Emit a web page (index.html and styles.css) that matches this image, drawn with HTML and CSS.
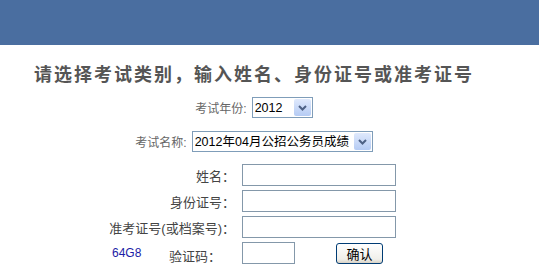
FILE: index.html
```html
<!DOCTYPE html>
<html lang="zh-CN">
<head>
    <meta charset="UTF-8">
    <title>成绩查询</title>
    <link rel="stylesheet" href="styles.css">
</head>
<body>
    <div class="site-header"></div>

    <div class="content">
        <h1 class="page-title">请选择考试类别，输入姓名、身份证号或准考证号</h1>

        <div class="field-row">
            <label class="field-label">考试年份:</label>
            <span class="select-box">
                <select class="select-year">
                    <option>2012</option>
                </select>
                <span class="select-arrow"><svg width="9" height="6" viewBox="0 0 9 6"><path d="M1 1 L4.5 4.5 L8 1" fill="none" stroke="#4d6185" stroke-width="2"/></svg></span>
            </span>
        </div>

        <div class="field-row row-name">
            <label class="field-label">考试名称:</label>
            <span class="select-box">
                <select class="select-exam">
                    <option>2012年04月公招公务员成绩</option>
                </select>
                <span class="select-arrow"><svg width="9" height="6" viewBox="0 0 9 6"><path d="M1 1 L4.5 4.5 L8 1" fill="none" stroke="#4d6185" stroke-width="2"/></svg></span>
            </span>
        </div>

        <form class="query-form" onsubmit="return false">
            <div class="form-row">
                <label class="form-label">姓名：</label>
                <input type="text" class="text-input">
            </div>
            <div class="form-row">
                <label class="form-label">身份证号：</label>
                <input type="text" class="text-input">
            </div>
            <div class="form-row">
                <label class="form-label">准考证号(或档案号)：</label>
                <input type="text" class="text-input">
            </div>
            <div class="form-row">
                <span class="captcha-code">64G8</span>
                <label class="captcha-label">验证码：</label>
                <input type="text" class="text-input captcha-input">
                <button type="submit" class="submit-btn">确认</button>
            </div>
        </form>
    </div>
</body>
</html>
```

FILE: styles.css
```css
body {
    margin: 0;
    font-family: "Liberation Sans", "Noto Sans CJK SC", sans-serif;
    font-size: 12px;
    color: #555;
    background: #fff;
}

.site-header {
    height: 45px;
    background: #4a6ea0;
}

.content {
    width: 508px;
}

.page-title {
    margin: 20px 0 0;
    font-size: 18px;
    line-height: 20px;
    font-weight: bold;
    letter-spacing: 2px;
    text-align: center;
    color: #555;
}

.field-row {
    display: flex;
    justify-content: center;
    align-items: center;
    height: 21px;
    margin-top: 12px;
}

.row-name {
    margin-top: 13px;
}

.field-label {
    margin-right: 5px;
    color: #666;
    font-size: 12px;
}

.select-box {
    display: inline-flex;
    align-items: center;
    box-sizing: border-box;
    height: 21px;
    padding-right: 1px;
    border: 1px solid #7f9db9;
    background: #fff;
}

.select-box select {
    -webkit-appearance: none;
    appearance: none;
    border: 0;
    outline: none;
    background: transparent;
    height: 19px;
    padding: 0 0 0 2px;
    font-family: "Liberation Sans", "Noto Sans CJK SC", sans-serif;
    font-size: 12.5px;
    color: #000;
}

.select-year {
    width: 41px;
}

.select-exam {
    width: 161px;
}

.select-arrow {
    display: flex;
    align-items: center;
    justify-content: center;
    width: 17px;
    height: 17px;
    border-radius: 2px;
    background: linear-gradient(#dfe9fc, #b5cbf4);
}

.query-form {
    margin: 12px 0 0;
}

.form-row {
    display: flex;
    align-items: center;
    height: 22px;
    margin-top: 4px;
}

.form-label {
    width: 235px;
    text-align: right;
    font-size: 13px;
    color: #444;
}

.text-input {
    box-sizing: border-box;
    width: 154px;
    height: 22px;
    margin: 0 0 0 7px;
    padding: 1px 3px;
    border: 1px solid #8498aa;
    font-size: 13px;
}

.captcha-code {
    width: 57px;
    margin-left: 112px;
    color: #1c1ca6;
    font-size: 12px;
}

.captcha-label {
    width: 73px;
    padding-top: 5px;
    font-size: 13px;
    color: #444;
}

.captcha-input {
    width: 53px;
    margin-left: 0;
}

.submit-btn {
    box-sizing: border-box;
    width: 47px;
    height: 21px;
    margin-left: 41px;
    padding: 0;
    border: 1px solid #003c74;
    border-radius: 3px;
    background: linear-gradient(#ffffff, #f0efea 80%, #d8d2c6);
    font-family: "Liberation Sans", "Noto Sans CJK SC", sans-serif;
    font-size: 13px;
    color: #000;
    cursor: pointer;
}
```
